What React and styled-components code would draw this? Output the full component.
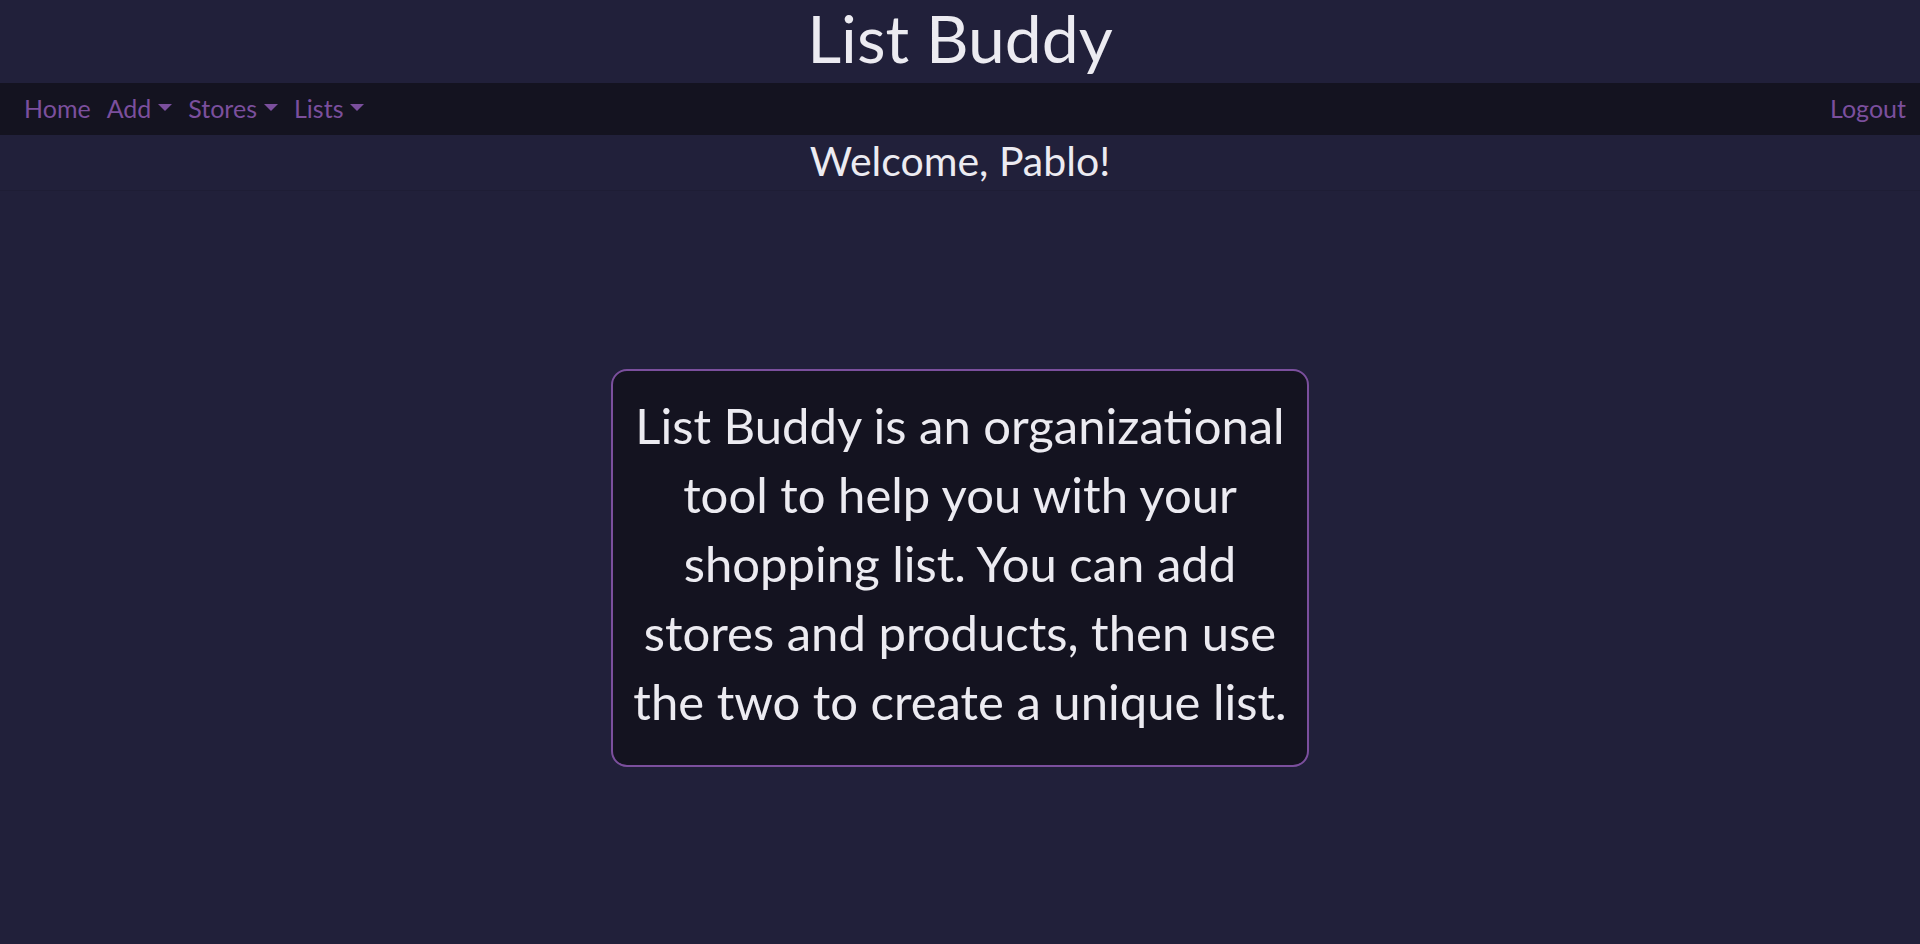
import React from "react";
import styled, { createGlobalStyle } from "styled-components";

const GlobalStyle = createGlobalStyle`
  html, body {
    margin: 0;
    padding: 0;
    background: #21203a;
  }
  body {
    font-family: "Lato", "Noto Sans", sans-serif;
    color: #ecebf1;
  }
  * {
    box-sizing: border-box;
  }
`;

const Page = styled.div`
  display: flex;
  flex-direction: column;
  min-height: 100vh;
  background: #21203a;
`;

const Header = styled.header`
  height: 83px;
  display: flex;
  align-items: center;
  justify-content: center;
`;

const Title = styled.h1`
  margin: 0;
  font-size: 66px;
  font-weight: 400;
  line-height: 1;
  color: #ecebf1;
  transform: translateY(-4px);
`;

const Navbar = styled.nav`
  height: 52px;
  background: #141320;
  display: flex;
  align-items: center;
  justify-content: space-between;
  padding: 0 6px 0 16px;
`;

const NavList = styled.ul`
  display: flex;
  align-items: center;
  list-style: none;
  margin: 0;
  padding: 0;
`;

const NavLink = styled.a`
  display: flex;
  align-items: center;
  padding: 8px 8px;
  font-size: 25px;
  color: #7b4f9d;
  text-decoration: none;
  cursor: pointer;
  transform: translateY(-1px);

  ${({ $dropdown }) =>
    $dropdown &&
    `
    &::after {
      content: "";
      display: inline-block;
      margin-left: 7px;
      border-top: 7px solid currentColor;
      border-left: 7px solid transparent;
      border-right: 7px solid transparent;
      transform: translateY(-1px);
    }
  `}
`;

const Welcome = styled.h2`
  margin: 0;
  height: 56px;
  display: flex;
  align-items: center;
  justify-content: center;
  padding-bottom: 4px;
  font-size: 41px;
  font-weight: 400;
  color: #ecebf1;
  border-bottom: 1px solid #1e1d35;
`;

const Main = styled.main`
  flex: 1;
  display: flex;
  align-items: center;
  justify-content: center;
`;

const InfoCard = styled.div`
  width: 698px;
  height: 398px;
  padding: 14px 14px 22px;
  display: flex;
  align-items: center;
  justify-content: center;
  background: #141320;
  border: 2px solid #7b4f9d;
  border-radius: 16px;
`;

const InfoText = styled.p`
  margin: 0;
  font-size: 49px;
  line-height: 69px;
  text-align: center;
  color: #ecebf1;
`;

export default function App() {
  return (
    <>
      <GlobalStyle />
      <Page>
        <Header>
          <Title>List Buddy</Title>
        </Header>
        <Navbar>
          <NavList>
            <li><NavLink>Home</NavLink></li>
            <li><NavLink $dropdown>Add</NavLink></li>
            <li><NavLink $dropdown>Stores</NavLink></li>
            <li><NavLink $dropdown>Lists</NavLink></li>
          </NavList>
          <NavList>
            <li><NavLink>Logout</NavLink></li>
          </NavList>
        </Navbar>
        <Welcome>Welcome, Pablo!</Welcome>
        <Main>
          <InfoCard>
            <InfoText>
              List Buddy is an organizational tool to help you with your
              shopping list. You can add stores and products, then use the two
              to create a unique list.
            </InfoText>
          </InfoCard>
        </Main>
      </Page>
    </>
  );
}
